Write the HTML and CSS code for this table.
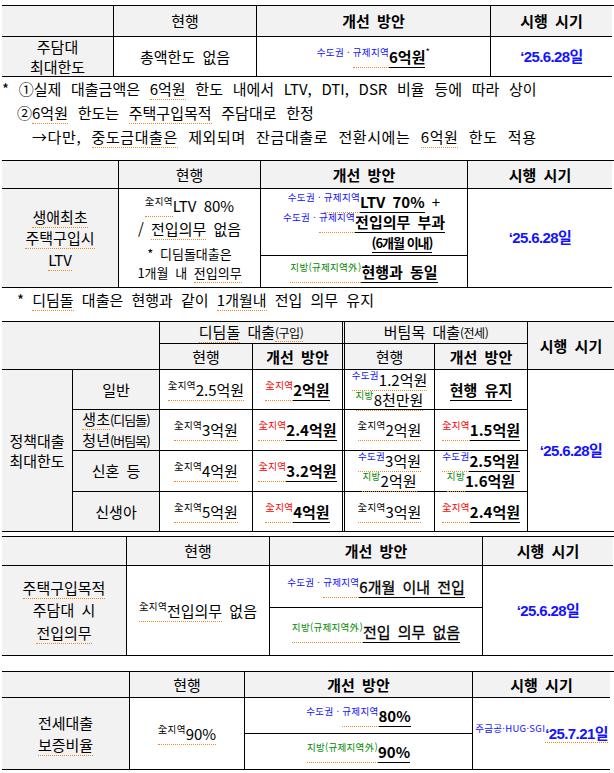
FILE: index.html
```html
<!DOCTYPE html>
<html lang="ko">
<head>
<meta charset="utf-8">
<title>정책대출 개선 방안</title>
<link rel="stylesheet" href="styles.css">
</head>
<body>
<div class="page">

  <div class="tbl t1">
    <div class="c h"></div>
    <div class="c h">현행</div>
    <div class="c h b">개선 방안</div>
    <div class="c h b last">시행 시기</div>
    <div class="c lbl"><div>주담대</div><div>최대한도</div></div>
    <div class="c"><div>총액한도 없음</div></div>
    <div class="c"><div><span class="sup blue">수도권 · </span><span class="sq"><span class="sup blue">규제지역</span></span><span class="ul">6억원</span><span class="sup">*</span></div></div>
    <div class="c last"><div class="date">‘25.6.28일</div></div>
  </div>

  <div class="notes">
    <div>* ①실제 대출금액은 <span class="sq">6억원</span> 한도 내에서 LTV, DTI, DSR 비율 등에 따라 상이</div>
    <div class="n2">②<span class="sq">6억원</span> 한도는 <span class="sq">주택구입목적</span> 주담대로 한정</div>
    <div class="n3">→다만, <span class="sq">중도금대출은</span> 제외되며 잔금대출로 전환시에는 <span class="sq">6억원</span> 한도 적용</div>
  </div>

  <div class="tbl t2">
    <div class="c h"></div>
    <div class="c h">현행</div>
    <div class="c h b">개선 방안</div>
    <div class="c h b last">시행 시기</div>
    <div class="c lbl r2 tall"><div><span class="sq">생애최초</span></div><div><span class="sq">주택구입시</span></div><div><span class="sq">LTV</span></div></div>
    <div class="c r2">
      <div class="g1">
        <div><span class="sq"><span class="sup">全지역</span></span>LTV 80%</div>
        <div>/ <span class="sq">전입의무</span> 없음</div>
      </div>
      <div class="g2">
        <div>* 디딤돌대출은</div>
        <div>1개월 내 <span class="sq">전입의무</span></div>
      </div>
    </div>
    <div class="c">
      <div><span class="sup blue">수도권 · </span><span class="sq"><span class="sup blue">규제지역</span></span><span class="ul">LTV 70%</span> +</div>
      <div><span class="sup blue">수도권 · </span><span class="sq"><span class="sup blue">규제지역</span></span><span class="ul">전입의무 부과</span></div>
      <div class="shift"><span class="ul sm">(6개월 이내)</span></div>
    </div>
    <div class="c last r2"><div class="date">‘25.6.28일</div></div>
    <div class="c"><div><span class="sq"><span class="sup green">지방(규제지역外)</span></span><span class="ul">현행과 동일</span></div></div>
  </div>

  <div class="note2">* <span class="sq">디딤돌</span> 대출은 현행과 같이 <span class="sq">1개월내</span> 전입 의무 유지</div>

  <div class="tbl t3">
    <div class="c h s2 r2"></div>
    <div class="c h s2 dbl"><div><span class="sq">디딤돌</span> 대출<span class="sq paren">(구입)</span></div></div>
    <div class="c h s2"><div>버팀목 대출<span class="paren">(전세)</span></div></div>
    <div class="c h b last r2">시행 시기</div>
    <div class="c h">현행</div>
    <div class="c h b dbl">개선 방안</div>
    <div class="c h">현행</div>
    <div class="c h b">개선 방안</div>

    <div class="c lbl r4"><div>정책대출</div><div>최대한도</div></div>
    <div class="c lbl"><div>일반</div></div>
    <div class="c"><div><span class="sq"><span class="sup">全지역</span>2.5억원</span></div></div>
    <div class="c dbl"><div><span class="sq"><span class="sup red">全지역</span></span><span class="ul">2억원</span></div></div>
    <div class="c"><div><span class="sq"><span class="sup blue">수도권</span>1.2억원</span></div><div><span class="sq"><span class="sup green">지방</span>8천만원</span></div></div>
    <div class="c"><div><span class="ul">현행 유지</span></div></div>
    <div class="c last r4"><div class="date">‘25.6.28일</div></div>

    <div class="c lbl"><div><span class="sq">생초</span><span class="paren2">(디딤돌)</span></div><div>청년<span class="paren2">(버팀목)</span></div></div>
    <div class="c"><div><span class="sq"><span class="sup">全지역</span>3억원</span></div></div>
    <div class="c dbl"><div><span class="sq"><span class="sup red">全지역</span></span><span class="ul">2.4억원</span></div></div>
    <div class="c"><div><span class="sq"><span class="sup">全지역</span>2억원</span></div></div>
    <div class="c"><div><span class="sq"><span class="sup red">全지역</span></span><span class="ul">1.5억원</span></div></div>

    <div class="c lbl"><div>신혼 등</div></div>
    <div class="c"><div><span class="sq"><span class="sup">全지역</span>4억원</span></div></div>
    <div class="c dbl"><div><span class="sq"><span class="sup red">全지역</span></span><span class="ul">3.2억원</span></div></div>
    <div class="c"><div><span class="sq"><span class="sup blue">수도권</span>3억원</span></div><div><span class="sq"><span class="sup green">지방</span>2억원</span></div></div>
    <div class="c"><div><span class="sq"><span class="sup blue">수도권</span></span><span class="ul">2.5억원</span></div><div><span class="sq"><span class="sup green">지방</span></span><span class="ul">1.6억원</span></div></div>

    <div class="c lbl"><div>신생아</div></div>
    <div class="c"><div><span class="sq"><span class="sup">全지역</span>5억원</span></div></div>
    <div class="c dbl"><div><span class="sq"><span class="sup red">全지역</span></span><span class="ul">4억원</span></div></div>
    <div class="c"><div><span class="sq"><span class="sup">全지역</span>3억원</span></div></div>
    <div class="c"><div><span class="sq"><span class="sup red">全지역</span></span><span class="ul">2.4억원</span></div></div>
  </div>

  <div class="tbl t4">
    <div class="c h"></div>
    <div class="c h">현행</div>
    <div class="c h b">개선 방안</div>
    <div class="c h b last">시행 시기</div>
    <div class="c lbl r2 tall2"><div><span class="sq">주택구입목적</span></div><div>주담대 시</div><div><span class="sq">전입의무</span></div></div>
    <div class="c r2"><div><span class="sq"><span class="sup">全지역</span>전입의무</span> 없음</div></div>
    <div class="c"><div><span class="sup blue">수도권 · </span><span class="sq"><span class="sup blue">규제지역</span></span><span class="ul md">6개월 이내 전입</span></div></div>
    <div class="c last r2"><div class="date">‘25.6.28일</div></div>
    <div class="c"><div><span class="sq"><span class="sup green">지방(규제지역外)</span></span><span class="ul md">전입 의무 없음</span></div></div>
  </div>

  <div class="tbl t5">
    <div class="c h"></div>
    <div class="c h">현행</div>
    <div class="c h b">개선 방안</div>
    <div class="c h b last">시행 시기</div>
    <div class="c lbl r2 tall"><div>전세대출</div><div><span class="sq">보증비율</span></div></div>
    <div class="c r2"><div><span class="sq"><span class="sup">全지역</span>90%</span></div></div>
    <div class="c"><div><span class="sup blue">수도권 · </span><span class="sq"><span class="sup blue">규제지역</span></span><span class="ul">80%</span></div></div>
    <div class="c last r2"><div><span class="sup blue">주금공·HUG·SGI</span><span class="sq date">‘25.7.21일</span></div></div>
    <div class="c"><div><span class="sq"><span class="sup green">지방(규제지역外)</span></span><span class="ul">90%</span></div></div>
  </div>

</div>
</body>
</html>
```

FILE: styles.css
```css
* { box-sizing: border-box; }

body {
  margin: 0;
  background: #fff;
  color: #000;
  font-family: "Noto Sans CJK KR", "Noto Sans", sans-serif;
  font-size: 15px;
}

.page {
  padding: 5px 0 0 2px;
}

.tbl {
  display: grid;
  border-top: 1px solid #000;
}

.t1 { grid-template-columns: 112px 143px 234px 121px; grid-template-rows: 31px 40px; }
.t2 { grid-template-columns: 117px 142px 207px 144px; grid-template-rows: 28px 67px 32px; margin-top: 11px; }
.t3 { grid-template-columns: 71px 87px 93px 92px 90px 93px 86px; grid-template-rows: 22px 26px 40px 41px 41px 40px; margin-top: 9px; }
.t4 { grid-template-columns: 125px 143px 213px 130px; grid-template-rows: 29px 42px 48px; margin-top: 4px; }
.t5 { grid-template-columns: 128px 115px 228px 137px; grid-template-rows: 26px 36px 36px; margin-top: 15px; }

.c {
  display: flex;
  flex-direction: column;
  justify-content: center;
  align-items: center;
  text-align: center;
  white-space: nowrap;
  line-height: 20px;
  word-spacing: 3px;
  border-right: 1px solid #000;
  border-bottom: 1px solid #000;
}

.last { border-right: 0; }
.dbl { border-right: 3px double #000; }
.r2 { grid-row: span 2; }
.r4 { grid-row: span 4; }
.s2 { grid-column: span 2; }

.h, .lbl { background: #f2f2f2; }
.b { font-weight: 700; }

.tall { line-height: 21.5px; }
.tall2 { line-height: 22.5px; }

.g1 { line-height: 23px; }
.g2 { font-size: 13px; line-height: 19px; margin-top: 4px; }

.shift { padding-left: 76px; }

.sup {
  font-size: 9.5px;
  line-height: 1;
  vertical-align: 7px;
  letter-spacing: 0.3px;
  word-spacing: 0;
  font-weight: 400;
}

.blue { color: #1010ff; }
.green { color: #008a00; }
.red { color: #ff0000; }

.sq { border-bottom: 1px dotted #ea8a1e; }

.ul {
  font-weight: 700;
  border-bottom: 1px solid #000;
}

.ul.md { font-weight: 400; -webkit-text-stroke: 0.3px #000; }

.ul.sm {
  font-size: 13px;
  letter-spacing: -1px;
  word-spacing: 0;
}

.paren { font-size: 12px; letter-spacing: -0.5px; }
.paren2 { font-size: 13px; letter-spacing: -1px; }

.date {
  font-family: "Liberation Sans", "Noto Sans CJK KR", sans-serif;
  font-weight: 700;
  font-size: 15px;
  color: #1414ff;
  letter-spacing: -0.6px;
}

.notes {
  line-height: 24px;
  word-spacing: 5.5px;
  white-space: nowrap;
}

.n2 { padding-left: 15px; }
.n3 { padding-left: 30px; letter-spacing: 0.6px; }

.note2 {
  line-height: 24px;
  word-spacing: 4px;
  padding-left: 15px;
  white-space: nowrap;
}
```
